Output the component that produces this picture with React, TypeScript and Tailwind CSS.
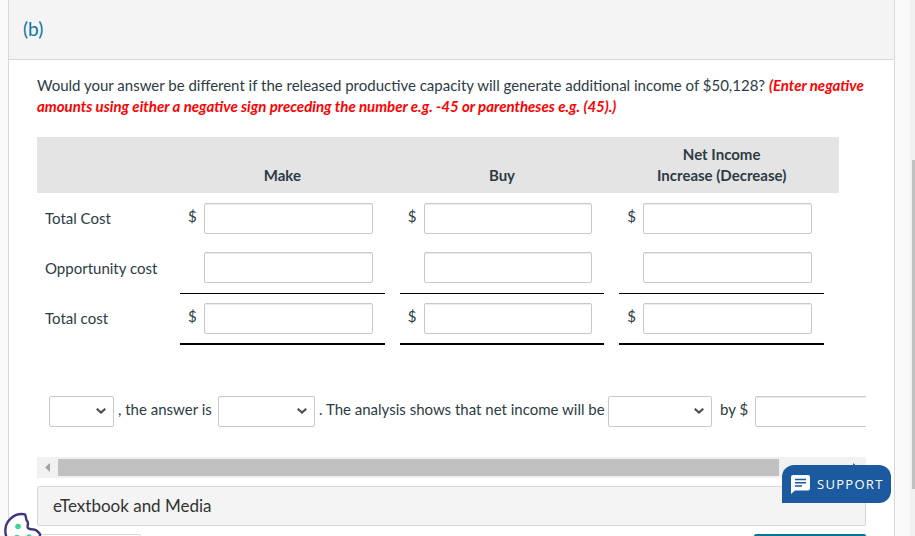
import React from 'react';

interface CostRow {
  label: string;
  dollar: boolean;
  height: string;
  rule: string;
}

const columns = [['Make'], ['Buy'], ['Net Income', 'Increase (Decrease)']];

const rows: CostRow[] = [
  { label: 'Total Cost', dollar: true, height: 'h-[50px]', rule: '' },
  { label: 'Opportunity cost', dollar: false, height: 'h-[50px]', rule: 'border-b border-black' },
  { label: 'Total cost', dollar: true, height: 'h-[51px]', rule: 'border-b-2 border-black' },
];

const fieldStyle =
  'h-[31px] rounded-xs border border-[#c9c9c9] bg-white px-2 text-[15px] shadow-[inset_0_1px_1px_rgba(0,0,0,0.08)] focus:outline-none';

interface BlankSelectProps {
  label: string;
  options: string[];
  width: string;
}

const BlankSelect: React.FC<BlankSelectProps> = ({ label, options, width }) => (
  <span className={`relative shrink-0 ${width}`}>
    <select
      aria-label={label}
      defaultValue=""
      className="block h-[31px] w-full appearance-none rounded-xs border border-[#c9c9c9] bg-white pl-2 pr-6 focus:outline-none"
    >
      <option value=""></option>
      {options.map((option) => (
        <option key={option}>{option}</option>
      ))}
    </select>
    <svg
      viewBox="0 0 10 6"
      className="pointer-events-none absolute right-2 top-3 h-[6px] w-[10px]"
      fill="none"
      stroke="#4d4d4d"
      strokeWidth="2"
    >
      <path d="M0.7 0.7 L5 4.6 L9.3 0.7" />
    </svg>
  </span>
);

const CostTable: React.FC = () => (
  <div className="pr-[27px]">
    <table className="w-full table-fixed border-collapse">
      <colgroup>
        <col className="w-[143px]" />
        {columns.map(([name]) => (
          <React.Fragment key={name}>
            <col />
            <col className="w-[15px]" />
          </React.Fragment>
        ))}
      </colgroup>
      <thead>
        <tr className="h-14 bg-[#e4e4e4] align-bottom">
          <td></td>
          {columns.map((lines) => (
            <React.Fragment key={lines[0]}>
              <th scope="col" className="p-0 pb-[7px] font-bold">
                {lines.map((line) => (
                  <span key={line} className="block">
                    {line}
                  </span>
                ))}
              </th>
              <td></td>
            </React.Fragment>
          ))}
        </tr>
      </thead>
      <tbody>
        {rows.map((row) => (
          <tr key={row.label} className={row.height}>
            <th scope="row" className="pl-2 text-left font-normal">
              {row.label}
            </th>
            {columns.map((lines) => (
              <React.Fragment key={lines[0]}>
                <td className={`p-0 ${row.rule}`}>
                  <div className="flex items-center pr-3">
                    <span className="w-6 shrink-0 pb-1 pl-2">{row.dollar ? '$' : ''}</span>
                    <input
                      type="text"
                      aria-label={`${row.label} ${lines.join(' ')}`}
                      className={`min-w-0 flex-1 ${fieldStyle}`}
                    />
                  </div>
                </td>
                <td></td>
              </React.Fragment>
            ))}
          </tr>
        ))}
      </tbody>
    </table>
  </div>
);

const AnswerSentence: React.FC = () => (
  <div className="mt-[51px] flex items-center whitespace-nowrap pl-3">
    <BlankSelect label="Is the answer different" options={['Yes', 'No']} width="w-[65px]" />
    <span className="w-[104px] shrink-0 pb-1 pl-1">, the answer is</span>
    <BlankSelect label="The answer is" options={['different', 'the same']} width="w-[97px]" />
    <span className="w-[293px] shrink-0 pb-1 pl-1">. The analysis shows that net income will be</span>
    <BlankSelect label="Net income change" options={['increased', 'decreased']} width="w-[104px]" />
    <label htmlFor="amount" className="w-[43px] shrink-0 pb-1 pl-2">
      by $
    </label>
    <input id="amount" type="text" className={`w-[168px] shrink-0 ${fieldStyle}`} />
  </div>
);

const HorizontalScrollbar: React.FC = () => (
  <div className="mt-[30px] flex h-[21px] items-center bg-[#f1f1f1]">
    <svg viewBox="0 0 21 17" className="h-[17px] w-[21px]" fill="#a3a3a3">
      <path d="M8 8.5 L13 4 V13 Z" />
    </svg>
    <div className="h-[17px] flex-1 bg-[#c1c1c1]" />
    <div className="flex w-[87px] justify-end">
      <svg viewBox="0 0 21 17" className="h-[17px] w-[21px]" fill="#505050">
        <path d="M13 8.5 L8 4 V13 Z" />
      </svg>
    </div>
  </div>
);

const CookieButton: React.FC = () => (
  <button aria-label="Cookie settings" className="absolute left-[4px] top-[512px]">
    <svg viewBox="0 0 38 38" className="h-[38px] w-[38px]">
      <path
        d="M21 2.3 C10 0 0 10 1.5 21 C3 31 10 36 20 36 C29 36 36 30 36 22 C34 20 33 18 30 17.5 C27 17 25 17.5 24 16 C22.5 14 25 12 23.5 9.5 C21.5 8 22.5 5 21 2.3 Z"
        fill="white"
        stroke="#42367d"
        strokeWidth="2.4"
        strokeLinejoin="round"
      />
      <circle cx="14" cy="14.5" r="2.8" fill="#43d396" />
      <circle cx="13" cy="25.5" r="2.8" fill="#43d396" />
      <circle cx="25" cy="25" r="2.8" fill="#43d396" />
    </svg>
  </button>
);

const SupportButton: React.FC = () => (
  <button className="absolute right-[24px] top-[465px] flex h-[38px] w-[109px] items-center rounded-xl rounded-bl-none bg-[#1c5a9f] pl-[9px] text-white">
    <svg viewBox="0 0 19 19" className="mr-[7px] h-[19px] w-[19px]">
      <path d="M2 0 H17 Q19 0 19 2 V13.5 Q19 15.5 17 15.5 H4 L0 19 V2 Q0 0 2 0 Z" fill="white" />
      <path d="M4 4.5 H15 M4 7.8 H15 M4 11 H11" stroke="#1c5a9f" strokeWidth="1.6" />
    </svg>
    <span className="font-['Open_Sans',sans-serif] text-[13px] font-medium tracking-widest">SUPPORT</span>
  </button>
);

const App: React.FC = () => {
  return (
    <div className="relative flex h-screen overflow-hidden bg-[#fafafa] pl-2 font-[Lato,sans-serif] text-[15px] leading-[21px] text-[#2d3b45]">
      <main className="min-w-0 flex-1">
        <section className="h-full border-x border-[#d8d8d8] bg-white">
          <header className="h-[60px] border-b border-[#d8d8d8] bg-[#f4f4f4] px-[14px] pt-[18px]">
            <h2 className="text-[19px] text-[#0e76a2]">(b)</h2>
          </header>
          <div className="px-7 pt-[15px]">
            <p>
              Would your answer be different if the released productive capacity will generate additional income of
              $50,128?{' '}
              <strong className="font-bold italic text-[#ff0000]">
                (Enter negative amounts using either a negative sign preceding the number e.g. -45 or parentheses e.g.
                (45).)
              </strong>
            </p>
            <div className="mt-5 overflow-hidden">
              <CostTable />
              <AnswerSentence />
              <HorizontalScrollbar />
            </div>
            <button className="mt-2 block h-10 w-full rounded-xs border border-[#d8d8d8] bg-[#f4f4f4] pb-[2px] pl-[15px] text-left text-[17px] text-[#333333]">
              eTextbook and Media
            </button>
            <div className="mt-2 flex justify-between">
              <button
                aria-label="Save for Later"
                className="h-9 w-[104px] rounded-xs border border-[#d8d8d8] bg-white"
              />
              <button aria-label="Submit Answer" className="h-9 w-[112px] rounded-xs bg-[#0774a0]" />
            </div>
          </div>
        </section>
      </main>
      <div className="ml-[15px] w-[5px] bg-[#f1f1f1] pl-[2px] pt-[160px]">
        <div className="h-[329px] bg-[#c1c1c1]" />
      </div>
      <CookieButton />
      <SupportButton />
    </div>
  );
};

export default App;
